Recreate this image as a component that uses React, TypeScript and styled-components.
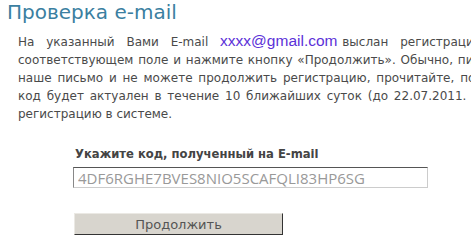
import React from 'react';
import styled, { createGlobalStyle } from 'styled-components';

const GlobalStyle = createGlobalStyle`
  html, body {
    margin: 0;
    padding: 0;
    background: #fff;
    overflow: hidden;
  }
  body {
    width: 471px;
    height: 239px;
  }
`;

const Page = styled('div')`
  font-family: 'DejaVu Sans', Verdana, sans-serif;
  width: 471px;
  height: 239px;
  overflow: hidden;
`;

const Title = styled('h1')`
  margin: 0;
  padding: 1px 0 0 7px;
  font-size: 20px;
  font-weight: normal;
  line-height: 22px;
  color: #3b7fa1;
`;

const Text = styled('div')`
  margin: 9px 0 0 18px;
  font-size: 12px;
  line-height: 18px;
  color: #4a4a4a;
`;

const Line = styled('div')<{ $spacing?: number }>`
  white-space: nowrap;
  word-spacing: ${(p) => p.$spacing || 0}px;
`;

const Email = styled('a')`
  font-family: 'Liberation Sans', Arial, sans-serif;
  font-size: 15.5px;
  line-height: 18px;
  color: #5b30d8;
  text-decoration: none;
  word-spacing: 0;
  margin-right: -7px;
`;

const Form = styled('div')`
  margin: 24px 0 0 73px;
  display: flex;
  flex-direction: column;
  align-items: flex-start;
`;

const Label = styled('label')`
  font-size: 11.6px;
  font-weight: bold;
  line-height: 14px;
  color: #444;
  padding-left: 2px;
`;

const CodeInput = styled('input')`
  box-sizing: border-box;
  width: 355px;
  height: 21px;
  margin-top: 6px;
  padding: 0 4px;
  border: 1px solid #ccc;
  border-top-color: #555;
  border-left-color: #888;
  background: #fff;
  font-family: 'Open Sans', sans-serif;
  font-size: 15px;
  color: #999;
  outline: none;
`;

const Button = styled('button')`
  box-sizing: border-box;
  width: 209px;
  height: 22px;
  margin: 25px 0 0 1px;
  padding: 0;
  border: 1px solid #ebe9e4;
  border-right-color: #333;
  border-bottom-color: #333;
  background-color: #d8d5ce;
  background-image: radial-gradient(#c6c3bc 0.6px, transparent 0.7px);
  background-size: 2px 2px;
  font-family: 'DejaVu Sans', Verdana, sans-serif;
  font-size: 13px;
  color: #555;
  cursor: pointer;
`;

export default function App() {
  return (
    <Page>
      <GlobalStyle />
      <Title>Проверка e-mail</Title>
      <Text>
        <Line $spacing={8}>
          На указанный Вами E-mail <Email href="#">xxxx@gmail.com</Email> выслан регистрационный код.
        </Line>
        <Line $spacing={1}>
          соответствующем поле и нажмите кнопку «Продолжить». Обычно, письмо приходит
        </Line>
        <Line $spacing={2}>
          наше письмо и не можете продолжить регистрацию, прочитайте, пожалуйста,
        </Line>
        <Line $spacing={2}>
          код будет актуален в течение 10 ближайших суток (до 22.07.2011. После
        </Line>
        <Line>регистрацию в системе.</Line>
      </Text>
      <Form>
        <Label htmlFor="code">Укажите код, полученный на E-mail</Label>
        <CodeInput id="code" defaultValue="4DF6RGHE7BVES8NIO5SCAFQLI83HP6SG" />
        <Button type="button">Продолжить</Button>
      </Form>
    </Page>
  );
}
